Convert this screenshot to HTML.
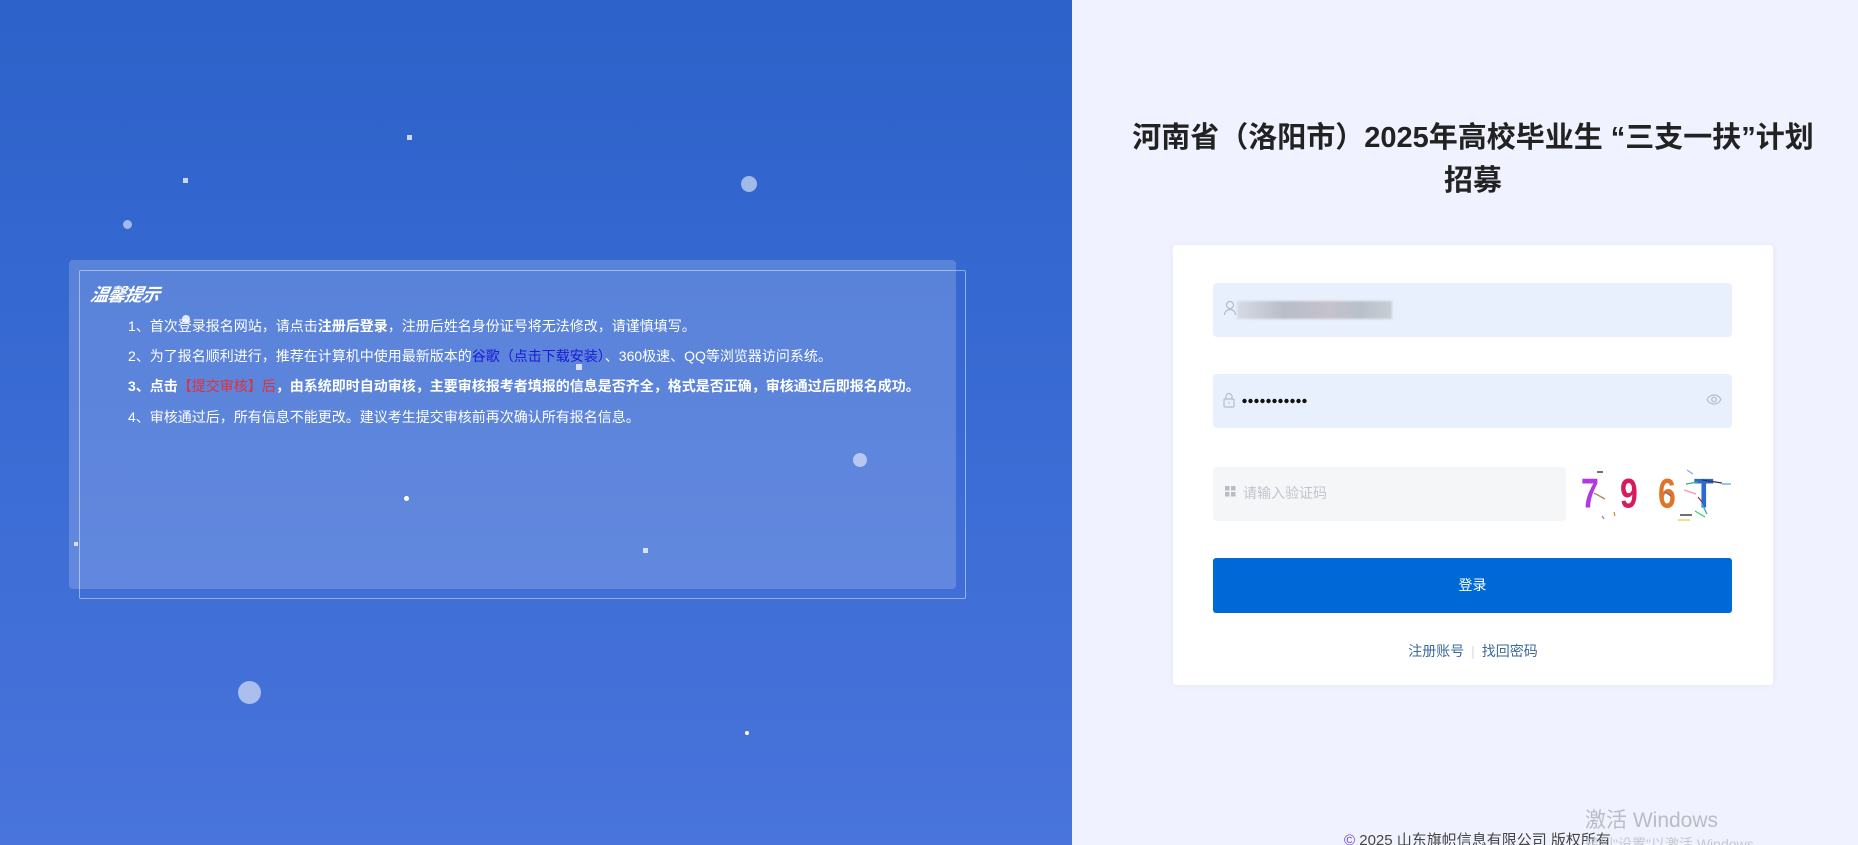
<!DOCTYPE html>
<html><head><meta charset="utf-8">
<style>
*{margin:0;padding:0;box-sizing:border-box}
html,body{width:1858px;height:845px;overflow:hidden;background:#f0f3ff;font-family:"Liberation Sans","Noto Sans CJK SC",sans-serif}
#wrap{position:relative;width:1858px;height:845px;overflow:hidden}
#left{position:absolute;left:0;top:0;width:1072px;height:845px;background:linear-gradient(180deg,#2c62c9 0%,#3a6bd4 50%,#4874db 100%);overflow:hidden}
.dot{position:absolute;background:rgba(255,255,255,.55);border-radius:50%}
.sq{position:absolute;background:rgba(255,255,255,.75)}
#box{position:absolute;left:69px;top:260px;width:887px;height:329px;background:rgba(255,255,255,.18);border-radius:4px}
#box2{position:absolute;left:79px;top:270px;width:887px;height:329px;border:1px solid rgba(255,255,255,.45);border-radius:2px}
#nt{position:absolute;left:91px;top:281px;font-size:18px;font-weight:bold;font-style:italic;color:#fff;letter-spacing:-1px;transform:skewX(-12deg)}
.ln{position:absolute;left:128px;font-size:14px;color:#fff;white-space:nowrap;line-height:20px}
.b{font-weight:bold}
.blue{color:#1a1ad8}
.red{color:#e0303a}
#title{position:absolute;left:1078px;width:790px;top:117px;text-align:center;font-size:29px;font-weight:bold;color:#222;line-height:43px}
#card{position:absolute;left:1173px;top:245px;width:600px;height:440px;background:#fff;border-radius:3px;box-shadow:0 0 8px rgba(0,0,0,.06)}
.inp{position:absolute;left:1213px;width:519px;height:54px;background:#e8f0fe;border-radius:4px}
#btn{position:absolute;left:1213px;top:558px;width:519px;height:55px;background:#0069d8;border-radius:3px;color:#fff;font-size:14px;text-align:center;line-height:55px}
#links{position:absolute;left:1173px;width:600px;top:641px;text-align:center;font-size:14px;color:#3b6aa0}
</style></head><body><div id="wrap">
<div id="left">
<div class="dot" style="left:741px;top:176px;width:16px;height:16px"></div>
<div class="dot" style="left:123px;top:220px;width:9px;height:9px"></div>
<div class="dot" style="left:238px;top:681px;width:23px;height:23px"></div>
<div class="dot" style="left:853px;top:453px;width:14px;height:14px"></div>
<div class="dot" style="left:404px;top:496px;width:5px;height:5px;background:#fff"></div>
<div class="dot" style="left:745px;top:731px;width:4px;height:4px;background:#fff"></div>
<div class="dot" style="left:182px;top:315px;width:8px;height:8px;background:rgba(255,255,255,.8)"></div>
<div class="sq" style="left:407px;top:135px;width:5px;height:5px"></div>
<div class="sq" style="left:183px;top:178px;width:5px;height:5px"></div>
<div class="sq" style="left:643px;top:548px;width:5px;height:5px"></div>
<div class="sq" style="left:576px;top:364px;width:6px;height:6px"></div>
<div class="sq" style="left:74px;top:542px;width:4px;height:4px"></div>
<div id="box"></div><div id="box2"></div>
<div id="nt">温馨提示</div>
<div class="ln" style="top:316px">1、首次登录报名网站，请点击<span class="b">注册后登录</span>，注册后姓名身份证号将无法修改，请谨慎填写。</div>
<div class="ln" style="top:346px">2、为了报名顺利进行，推荐在计算机中使用最新版本的<span class="blue">谷歌（点击下载安装）</span>、360极速、QQ等浏览器访问系统。</div>
<div class="ln b" style="top:376px">3、点击<span class="red" style="font-weight:normal">【提交审核】后</span>，由系统即时自动审核，主要审核报考者填报的信息是否齐全，格式是否正确，审核通过后即报名成功。</div>
<div class="ln" style="top:407px">4、审核通过后，所有信息不能更改。建议考生提交审核前再次确认所有报名信息。</div>
</div>
<div id="title">河南省（洛阳市）2025年高校毕业生 “三支一扶”计划<br>招募</div>
<div id="card"></div>
<div class="inp" style="top:283px"></div>
<svg style="position:absolute;left:1223px;top:300px" width="14" height="16" viewBox="0 0 14 16"><circle cx="7" cy="5" r="3.5" fill="none" stroke="#b5bcc8" stroke-width="1.2"/><path d="M1.5 15c0-3.5 2.5-5.5 5.5-5.5s5.5 2 5.5 5.5" fill="none" stroke="#b5bcc8" stroke-width="1.2"/></svg>
<div style="position:absolute;left:1237px;top:301px;width:155px;height:18px;background:linear-gradient(90deg,#d6dbe6,#b8bdc8 30%,#c5c2cc 60%,#b9c0c9 80%,#c9ced6);filter:blur(1px)"></div>
<div class="inp" style="top:374px"></div>
<svg style="position:absolute;left:1223px;top:392px" width="12" height="16" viewBox="0 0 12 16"><path d="M3 7V4.5a3 3 0 0 1 6 0V7" fill="none" stroke="#b5bcc8" stroke-width="1.2"/><rect x="1" y="7" width="10" height="8" rx="1" fill="none" stroke="#b5bcc8" stroke-width="1.2"/><path d="M6 10v2" stroke="#b5bcc8"/></svg>
<svg style="position:absolute;left:1242px;top:398px" width="70" height="6"><g fill="#111"><circle cx="2.5" cy="3" r="2.2"/><circle cx="8.5" cy="3" r="2.2"/><circle cx="14.5" cy="3" r="2.2"/><circle cx="20.5" cy="3" r="2.2"/><circle cx="26.5" cy="3" r="2.2"/><circle cx="32.5" cy="3" r="2.2"/><circle cx="38.5" cy="3" r="2.2"/><circle cx="44.5" cy="3" r="2.2"/><circle cx="50.5" cy="3" r="2.2"/><circle cx="56.5" cy="3" r="2.2"/><circle cx="62.5" cy="3" r="2.2"/></g></svg>
<svg style="position:absolute;left:1706px;top:394px" width="16" height="11" viewBox="0 0 16 11"><path d="M1 5.5C3 2 5.5 1 8 1s5 1 7 4.5C13 9 10.5 10 8 10S3 9 1 5.5z" fill="none" stroke="#b5bcc8" stroke-width="1.2"/><circle cx="8" cy="5.5" r="2.3" fill="none" stroke="#b5bcc8" stroke-width="1.2"/></svg>
<div class="inp" style="top:467px;width:353px;background:#f5f6f8"></div>
<svg style="position:absolute;left:1225px;top:486px" width="11" height="11"><rect x="0" y="0" width="4.5" height="4.5" fill="#b8bcc4"/><rect x="6" y="0" width="4.5" height="4.5" fill="#b8bcc4"/><rect x="0" y="6" width="4.5" height="4.5" fill="#b8bcc4"/><rect x="6" y="6" width="4.5" height="4.5" fill="#b8bcc4"/></svg>
<div style="position:absolute;left:1243px;top:483px;font-size:14px;color:#c0c4cc;line-height:20px">请输入验证码</div>
<svg style="position:absolute;left:1581px;top:467px" width="155" height="54" viewBox="0 0 155 54">
<g font-family="Liberation Sans" font-size="32" font-weight="bold" transform="scale(1,1.3)">
<text x="0" y="31" fill="#b03ae0">7</text>
<text x="39" y="31" fill="#d81b5a">9</text>
<text x="77" y="31" fill="#e07428">6</text>
<text x="113" y="31" fill="#2a6bd0">T</text></g>
<g stroke-width="1.3"><path d="M16 5h6" stroke="#223"/><path d="M13 26l11 6" stroke="#a86"/><path d="M106 3l6 4" stroke="#8ad"/><path d="M84 25l6 4" stroke="#66a"/><path d="M105 17l12 -2" stroke="#4a7"/><path d="M103 23l12 4" stroke="#e9a"/><path d="M121 13l20 3" stroke="#335"/><path d="M141 17h9" stroke="#5ae"/><path d="M114 44l10 6" stroke="#3c6"/><path d="M99 48h12" stroke="#223"/><path d="M97 53h12" stroke="#ec4"/><path d="M121 37l5 10" stroke="#3ab"/><path d="M117 30l4 5" stroke="#a34"/><path d="M33 45l1 4" stroke="#c93"/><path d="M21 49l2 3" stroke="#88c"/></g>
</svg>
<div id="btn">登录</div>
<div id="links">注册账号 <span style="color:#d8dbe2;margin:0 3px">|</span> 找回密码</div>
<div style="position:absolute;left:1344px;top:832px;font-size:15px;line-height:18px;color:#444;white-space:nowrap"><span style="color:#7040c0">©</span> 2025 山东旗帜信息有限公司 版权所有</div>
<div style="position:absolute;left:1585px;top:809px;font-size:21px;line-height:24px;color:#b8bcc4;white-space:nowrap">激活 Windows</div>
<div style="position:absolute;left:1585px;top:836px;font-size:14px;line-height:16px;color:#c4c8ce;white-space:nowrap">转到"设置"以激活 Windows。</div>
</div></body></html>
